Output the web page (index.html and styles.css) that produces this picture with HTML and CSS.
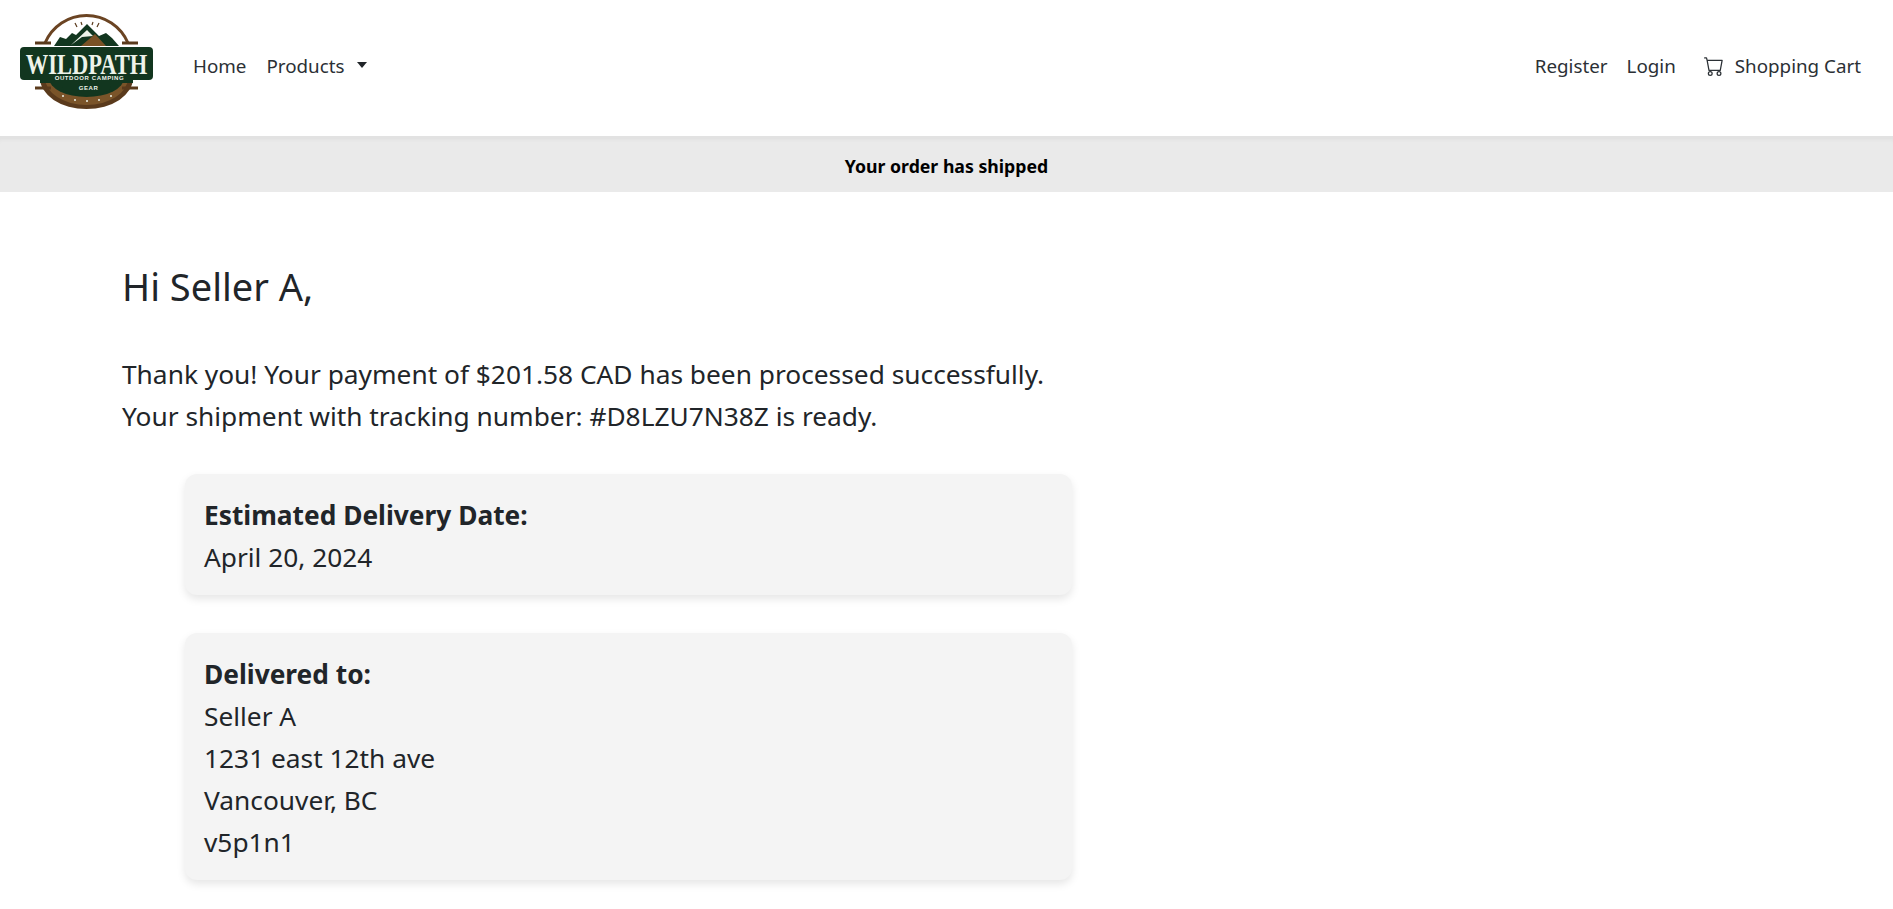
FILE: index.html
```html
<!DOCTYPE html>
<html lang="en">
<head>
    <meta charset="UTF-8">
    <meta name="viewport" content="width=device-width, initial-scale=1.0">
    <title>Your order has shipped</title>
    <link rel="stylesheet" href="styles.css">
</head>
<body>
    <nav class="navbar">
        <a class="brand" href="#">
            <svg class="logo" viewBox="0 0 140 100" width="140" height="100">
                <!-- top arch -->
                <path d="M29 31 A45 45 0 0 1 112 31" fill="none" stroke="#6b4423" stroke-width="3"/>
                <!-- bottom ring -->
                <path d="M24 66 A46.5 31 0 0 0 117 66 Z" fill="#5a3a1c"/>
                <path d="M29 66 A41.5 27 0 0 0 112 66 Z" fill="#7a5429"/>
                <path d="M33 66 A37.5 19 0 0 0 108 66 Z" fill="#12361f"/>
                <path d="M46 68 H95 V74 A24.5 10 0 0 1 46 74 Z" fill="#12361f"/>
                <!-- mountains -->
                <path d="M38 34 L44 25 L50 27 L56 21 L60 23 L71 12 L83 24 L90 21 L96 26 L103 34 Z" fill="#12361f"/>
                <path d="M55 33 L71 18 L77 24 L66 25 Z" fill="#eef3ea"/>
                <path d="M65 34 L79 22 L90 34 Z" fill="#7a5226"/>
                <path d="M59 11 L61 15 M65 10 L66 13 M77 10 L76 13 M83 11 L81 15" stroke="#5a3a1c" stroke-width="1.2"/>
                <!-- side bars -->
                <path d="M19 31 H35 M106 31 H122 M19 76 H35 M106 76 H122" stroke="#5a3a1c" stroke-width="3"/>
                <!-- banner -->
                <rect x="4" y="35" width="133" height="33" rx="4" fill="#12361f"/>
                <rect x="24" y="66" width="93" height="5" fill="#12361f"/>
                <text class="logo-name" text-anchor="middle" transform="translate(70.5 62) scale(1 1.35)">WILDPATH</text>
                <text class="logo-sub" x="73.5" y="68" text-anchor="middle">OUTDOOR CAMPING</text>
                <text class="logo-sub" x="72.5" y="78" text-anchor="middle">GEAR</text>
                <circle cx="47" cy="84" r="1" fill="#eef3ea"/><circle cx="59" cy="88" r="1" fill="#eef3ea"/>
                <circle cx="71" cy="89" r="1" fill="#eef3ea"/><circle cx="83" cy="88" r="1" fill="#eef3ea"/>
                <circle cx="95" cy="84" r="1" fill="#eef3ea"/>
            </svg>
        </a>
        <ul class="nav-list">
            <li><a class="nav-link" href="#">Home</a></li>
            <li><a class="nav-link dropdown" href="#">Products</a></li>
        </ul>
        <ul class="nav-list nav-right">
            <li><a class="nav-link" href="#">Register</a></li>
            <li><a class="nav-link" href="#">Login</a></li>
            <li class="cart-item">
                <a class="nav-link cart" href="#">
                    <svg class="cart-icon" viewBox="0 0 16 16" width="20" height="20" fill="currentColor">
                        <path d="M0 1.5A.5.5 0 0 1 .5 1H2a.5.5 0 0 1 .485.379L2.89 3H14.5a.5.5 0 0 1 .491.592l-1.5 8A.5.5 0 0 1 13 12H4a.5.5 0 0 1-.491-.408L2.01 3.607 1.61 2H.5a.5.5 0 0 1-.5-.5zM3.102 4l1.313 7h8.17l1.313-7H3.102zM5 12a2 2 0 1 0 0 4 2 2 0 0 0 0-4zm7 0a2 2 0 1 0 0 4 2 2 0 0 0 0-4zm-7 1a1 1 0 1 1 0 2 1 1 0 0 1 0-2zm7 0a1 1 0 1 1 0 2 1 1 0 0 1 0-2z"/>
                    </svg>
                    Shopping Cart
                </a>
            </li>
        </ul>
    </nav>

    <div class="status-bar">Your order has shipped</div>

    <main class="content">
        <h1 class="greeting">Hi Seller A,</h1>
        <p class="intro">
            Thank you! Your payment of $201.58 CAD has been processed successfully.<br>
            Your shipment with tracking number: #D8LZU7N38Z is ready.
        </p>
        <div class="info-card">
            <strong>Estimated Delivery Date:</strong><br>
            April 20, 2024
        </div>
        <div class="info-card">
            <strong>Delivered to:</strong><br>
            Seller A<br>
            1231 east 12th ave<br>
            Vancouver, BC<br>
            v5p1n1
        </div>
    </main>
</body>
</html>
```

FILE: styles.css
```css
* {
    box-sizing: border-box;
}
body {
    margin: 0;
    font-family: "Noto Sans", "Open Sans", sans-serif;
    color: #212529;
    background-color: #fff;
}
a {
    color: inherit;
    text-decoration: none;
}
.navbar {
    display: flex;
    align-items: center;
    height: 138px;
    padding: 0 32px 4px 16px;
    border-bottom: 2px solid #e2e2e2;
    background-color: #fff;
}
.brand {
    display: flex;
    margin-right: 37px;
}
.logo {
    display: block;
    margin-top: -8px;
}
.logo-name {
    font-family: "Liberation Serif", serif;
    font-size: 22.5px;
    font-weight: bold;
    fill: #eef3ea;
}
.logo-sub {
    font-family: "Liberation Sans", sans-serif;
    font-size: 6px;
    font-weight: bold;
    letter-spacing: 0.6px;
    fill: #eef3ea;
}
.nav-list {
    display: flex;
    align-items: center;
    gap: 20px;
    margin: 0;
    padding: 0;
    list-style: none;
    font-size: 18.8px;
    color: #2b3035;
}
.nav-right {
    margin-left: auto;
    gap: 19px;
}
.dropdown::after {
    content: "";
    display: inline-block;
    margin-left: 12px;
    vertical-align: 5px;
    border-top: 6px solid #212529;
    border-left: 5.5px solid transparent;
    border-right: 5.5px solid transparent;
}
.cart-item {
    margin-left: 9px;
}
.cart {
    display: flex;
    align-items: center;
    gap: 11px;
}
.status-bar {
    height: 54px;
    padding-top: 1px;
    line-height: 54px;
    text-align: center;
    font-size: 17.7px;
    font-weight: bold;
    color: #000;
    background-color: #eaeaea;
    box-shadow: inset 0 4px 4px -3px #ddd;
}
.content {
    padding: 65px 0 0 122px;
    width: 1072px;
}
.greeting {
    margin: 0 0 38px 0;
    font-size: 38px;
    font-weight: normal;
    line-height: 58px;
}
.intro {
    margin: 0 0 37px 0;
    font-size: 26.3px;
    line-height: 42px;
}
.info-card {
    margin: 0 0 38px 63px;
    padding: 20px 19px 17px 19px;
    font-size: 26.3px;
    line-height: 42px;
    background-color: #f4f4f4;
    border-radius: 12px;
    box-shadow: 0 4px 8px rgba(0, 0, 0, 0.1);
}
```
